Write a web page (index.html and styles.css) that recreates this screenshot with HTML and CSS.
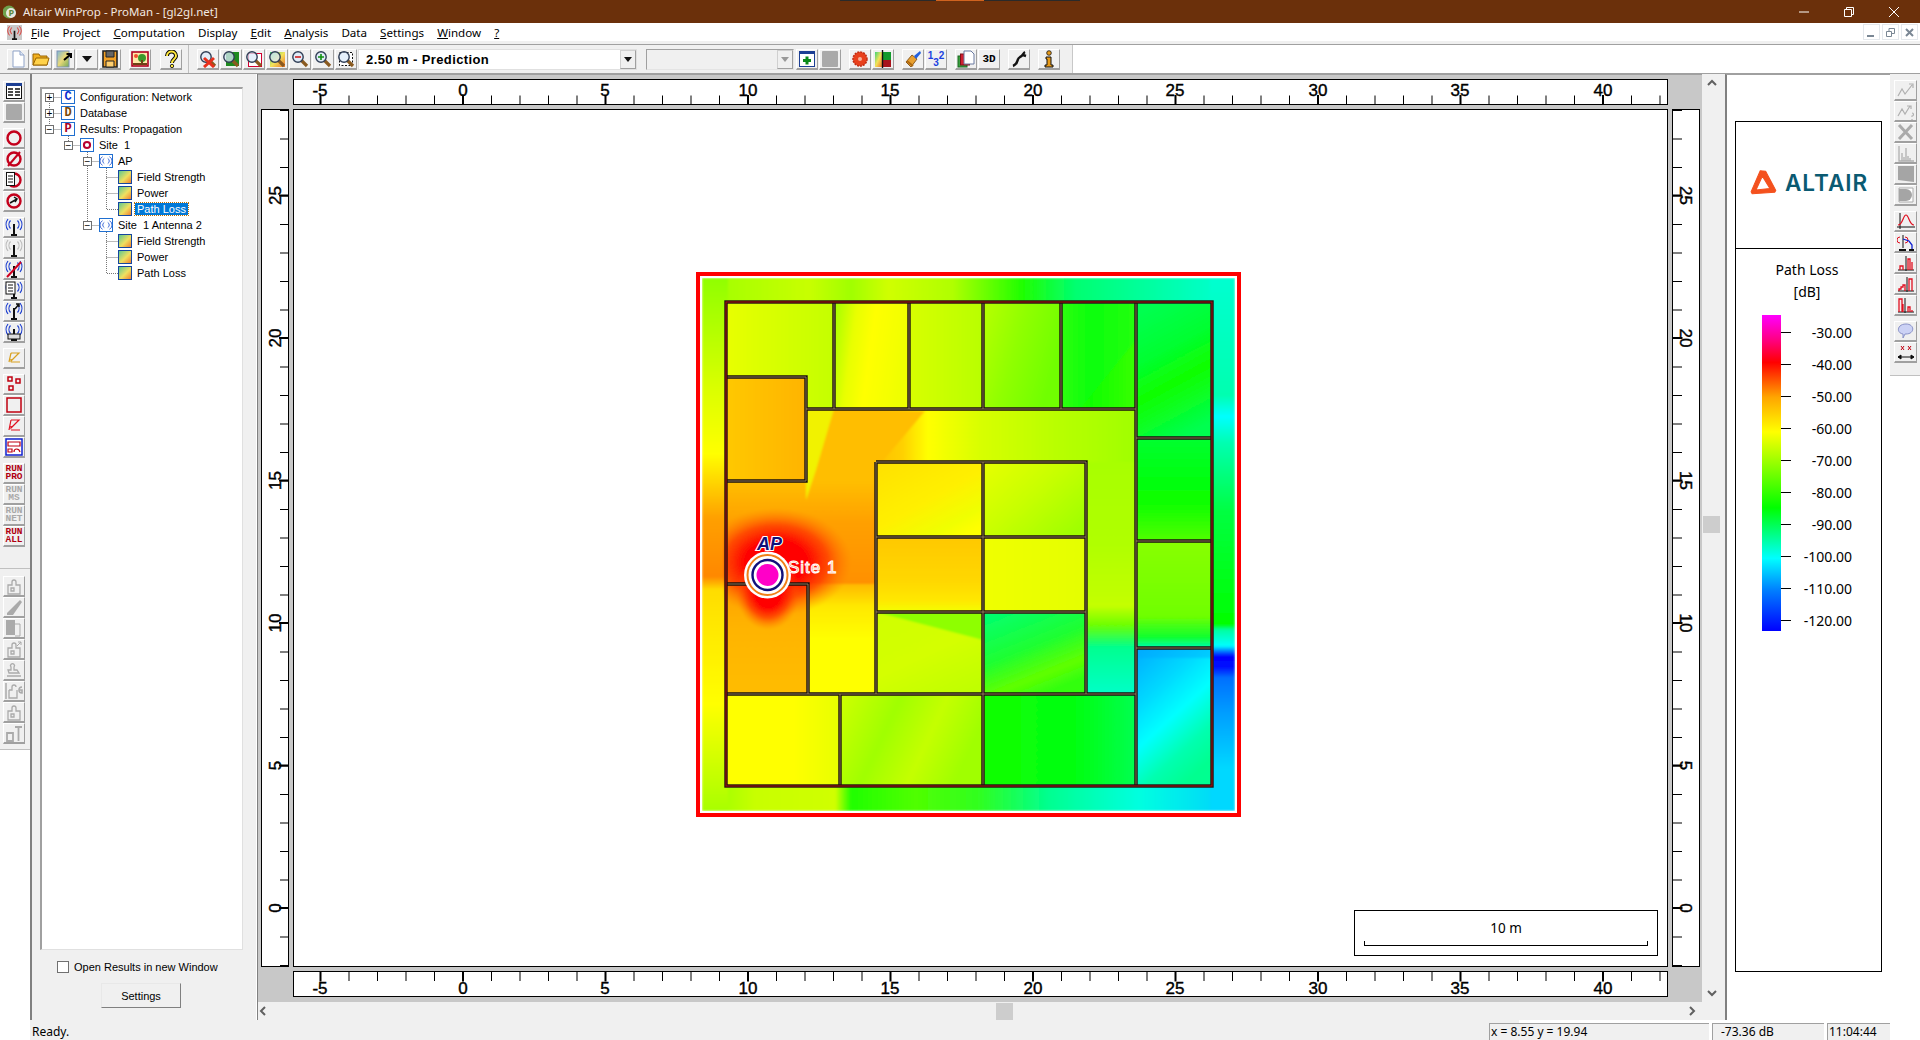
FILE: index.html
```html
<!DOCTYPE html>
<html>
<head>
    <meta charset="utf-8" />
    <title>Altair WinProp - ProMan</title>
    <link rel="stylesheet" href="styles.css">
</head>
<body>
<svg class="defs" width="0" height="0">
    <defs>
        <linearGradient id="heat" x1="0" y1="0" x2="1" y2="1"><stop offset="0" stop-color="#3fd27a"/><stop offset=".5" stop-color="#f3e35a"/><stop offset="1" stop-color="#f0722a"/></linearGradient>
        <linearGradient id="heat-soft" x1="0" y1="0" x2="1" y2="1"><stop offset="0" stop-color="#7fb8d8"/><stop offset=".5" stop-color="#e8d878"/><stop offset="1" stop-color="#70a858"/></linearGradient>
    </defs>
    <symbol id="doc" viewBox="0 0 18 18"><path d="M4 1h7l4 4v12H4z" fill="#fff" stroke="#8fa3c8"/><path d="M11 1v4h4" fill="#dde6f5" stroke="#8fa3c8"/></symbol>
    <symbol id="open" viewBox="0 0 18 18"><path d="M1 15V4h6l1 2h7v9z" fill="#f2b01e" stroke="#9a6400"/><path d="M1 15l3-7h13l-2 7z" fill="#ffd24a" stroke="#9a6400"/></symbol>
    <symbol id="import" viewBox="0 0 18 18"><rect x="2" y="1" width="12" height="16" fill="url(#heat-soft)" stroke="#7f93b5"/><path d="M9 10l6-5M11.500 4H16v4" fill="none" stroke="#000" stroke-width="2"/></symbol>
    <symbol id="save" viewBox="0 0 18 18"><path d="M2 1h14v16H2z" fill="#f2a024" stroke="#222" stroke-width="1.6"/><path d="M5 1h8v6H5z" fill="#666" stroke="#222"/><path d="M5 11h8v6H5z" fill="#ffcf70" stroke="#222"/></symbol>
    <symbol id="pic" viewBox="0 0 18 18"><rect x="1" y="2" width="16" height="14" fill="#ffe9a8" stroke="#b00020" stroke-width="1.6"/><circle cx="5" cy="6" r="2" fill="#f05030"/><circle cx="11" cy="8" r="4" fill="#3c9a2c"/><path d="M2 14h14M11 10v4" stroke="#6d4316" stroke-width="2"/></symbol>
    <symbol id="help" viewBox="0 0 18 18"><path d="M5 6c0-6 9-6 9 0 0 3-4 3-4 7" fill="none" stroke="#000" stroke-width="4"/><path d="M5 6c0-6 9-6 9 0 0 3-4 3-4 7" fill="none" stroke="#ffe83c" stroke-width="2"/><circle cx="10" cy="16" r="1.7" fill="#ffe83c" stroke="#000" stroke-width=".8"/></symbol>
    <symbol id="mag" viewBox="0 0 18 18"><path d="M10 10l6 6" stroke="#8a5a20" stroke-width="3.2"/><circle cx="7" cy="7" r="5.2" fill="#dcebfb" fill-opacity=".75" stroke="#2f3d55" stroke-width="1.4"/></symbol>
    <symbol id="z-x" viewBox="0 0 18 18"><use href="#mag" width="18" height="18"/><path d="M5 8l10 9M15 8L5 17" stroke="#e8301c" stroke-width="3"/></symbol>
    <symbol id="z-g" viewBox="0 0 18 18"><rect x="4" y="2" width="13" height="14" fill="#1e8a1e"/><use href="#mag" width="18" height="18"/></symbol>
    <symbol id="z-r" viewBox="0 0 18 18"><rect x="3.500" y="3.500" width="13" height="13" fill="#fff" stroke="#d00030"/><use href="#mag" width="18" height="18"/></symbol>
    <symbol id="z-h" viewBox="0 0 18 18"><rect x="2" y="2" width="15" height="15" fill="url(#heat)"/><use href="#mag" width="18" height="18"/></symbol>
    <symbol id="z-m" viewBox="0 0 18 18"><use href="#mag" width="18" height="18"/><path d="M4 7h6" stroke="#d02020" stroke-width="1.6"/></symbol>
    <symbol id="z-p" viewBox="0 0 18 18"><use href="#mag" width="18" height="18"/><path d="M4 7h6M7 4v6" stroke="#109010" stroke-width="1.6"/></symbol>
    <symbol id="z-d" viewBox="0 0 18 18"><rect x="2.500" y="2.500" width="13" height="13" fill="#fff" stroke="#111" stroke-dasharray="2 1.500"/><use href="#mag" width="18" height="18"/></symbol>
    <symbol id="win" viewBox="0 0 18 18"><rect x="1.500" y="1.500" width="15" height="15" fill="#fff" stroke="#1c3f94"/><rect x="1" y="1" width="16" height="3" fill="#1c3f94"/><path d="M9 6.500v8M5 10.500h8" stroke="#0a8a1a" stroke-width="3"/></symbol>
    <symbol id="grey" viewBox="0 0 18 18"><rect x="1" y="1" width="16" height="16" rx="1" fill="#a9a9a9"/></symbol>
    <symbol id="stop" viewBox="0 0 18 18"><circle cx="9" cy="9" r="7" fill="#e8401c"/><circle cx="9" cy="9" r="7" fill="none" stroke="#c02a10" stroke-width="1.500" stroke-dasharray="2 1"/><circle cx="9" cy="9" r="2" fill="#f5b09a"/></symbol>
    <symbol id="bars" viewBox="0 0 18 18"><rect x="1" y="2" width="7" height="15" fill="url(#heat)"/><rect x="9" y="2" width="8" height="8" fill="#139a2c"/><rect x="9" y="10" width="8" height="7" fill="#a8141c"/><path d="M8.500 0v18" stroke="#111" stroke-width="1.400"/></symbol>
    <symbol id="brush" viewBox="0 0 18 18"><path d="M2 12l6-7 5 4-6 8z" fill="#e8a030" stroke="#8a5a20"/><path d="M3 11l6 5" stroke="#b06a10" stroke-width="2"/><path d="M10 6l6-5 1 2-5 6z" fill="#2060e0"/></symbol>
    <symbol id="copies" viewBox="0 0 18 18"><rect x="1" y="6" width="9" height="11" fill="#3aa040" stroke="#1a6a20"/><rect x="3.500" y="4" width="9" height="11" fill="#d02030" stroke="#801018"/><path d="M7 1h7l3 3v10H7z" fill="#fff" stroke="#6a7aa0"/></symbol>
    <symbol id="tool" viewBox="0 0 18 18"><path d="M3 16c6-2 3-7 7-9 3-1 3-4 5-5M13 5l3 1" fill="none" stroke="#111" stroke-width="2.400"/></symbol>
    <symbol id="info" viewBox="0 0 18 18"><circle cx="9" cy="3" r="2.300" fill="#e89a18" stroke="#111" stroke-width=".8"/><path d="M6 7h5v8h2v2H5v-2h2V9H6z" fill="#e89a18" stroke="#111"/></symbol>
    <symbol id="table" viewBox="0 0 18 18"><rect x="1.500" y="1.500" width="15" height="15" fill="#fff" stroke="#111"/><rect x="1" y="1" width="16" height="3" fill="#1c3f94"/><path d="M3 7h5M10 7h5M3 10h5M10 10h5M3 13h5M10 13h5" stroke="#111" stroke-width="1.600"/></symbol>
    <symbol id="ring" viewBox="0 0 18 18"><circle cx="9" cy="9" r="6.500" fill="none" stroke="#c4001c" stroke-width="2.400"/></symbol>
    <symbol id="ring-x" viewBox="0 0 18 18"><use href="#ring" width="18" height="18"/><path d="M3 16L15 2" stroke="#c4001c" stroke-width="2"/></symbol>
    <symbol id="ring-d" viewBox="0 0 18 18"><use href="#ring" width="18" height="18"/><rect x="1.500" y="1.500" width="8" height="13" fill="#fff" stroke="#111"/><path d="M3 5h5M3 8h5M3 11h5" stroke="#111"/></symbol>
    <symbol id="ring-a" viewBox="0 0 18 18"><use href="#ring" width="18" height="18"/><path d="M5 11l7-4M9 5l3 2-2 3" fill="none" stroke="#111" stroke-width="1.500"/></symbol>
    <symbol id="ant" viewBox="0 0 18 18"><path d="M5.500 2.500a6 6 0 0 0 0 8M12.500 2.500a6 6 0 0 1 0 8M3 1a9 9 0 0 0 0 11M15 1a9 9 0 0 1 0 11" fill="none" stroke="#1d3fd0" stroke-width="1.200"/><path d="M9 6v10" stroke="#111" stroke-width="2"/><path d="M6 17h6" stroke="#111" stroke-width="2"/></symbol>
    <symbol id="ant-off" viewBox="0 0 18 18"><path d="M5.500 2.500a6 6 0 0 0 0 8M12.500 2.500a6 6 0 0 1 0 8M3 1a9 9 0 0 0 0 11M15 1a9 9 0 0 1 0 11" fill="none" stroke="#bbb" stroke-width="1.200"/><path d="M9 6v10" stroke="#111" stroke-width="2"/><path d="M6 17h6" stroke="#111" stroke-width="2"/></symbol>
    <symbol id="ant-x" viewBox="0 0 18 18"><use href="#ant" width="18" height="18"/><path d="M2 17L16 2" stroke="#d00020" stroke-width="2"/></symbol>
    <symbol id="ant-d" viewBox="0 0 18 18"><use href="#ant" width="18" height="18"/><rect x="1" y="1" width="9" height="12" fill="#fff" stroke="#111"/><path d="M3 4h5M3 7h5M3 10h5" stroke="#111"/></symbol>
    <symbol id="ant-a" viewBox="0 0 18 18"><use href="#ant" width="18" height="18"/><path d="M10 7l4-5M11 2h3v3" fill="none" stroke="#111" stroke-width="1.500"/></symbol>
    <symbol id="ant-p" viewBox="0 0 18 18"><use href="#ant" width="18" height="18"/><rect x="3" y="11" width="12" height="5" fill="#ddd" stroke="#111"/></symbol>
    <symbol id="poly-y" viewBox="0 0 18 18"><path d="M6 4h8l-8 8v-2M6 13h9M6 4l-2 9" fill="none" stroke="#d8a020" stroke-width="1.200"/></symbol>
    <symbol id="poly-r" viewBox="0 0 18 18"><path d="M6 3h8l-8 8v-2M6 13h9M6 3l-2 10" fill="none" stroke="#e01020" stroke-width="1.200"/></symbol>
    <symbol id="dots" viewBox="0 0 18 18"><path d="M3 2h4v4H3zM11 4h4v4h-4zM4 11h4v4H4z" fill="none" stroke="#c00010" stroke-width="1.500"/></symbol>
    <symbol id="box" viewBox="0 0 18 18"><rect x="2" y="2" width="14" height="14" fill="none" stroke="#c00010" stroke-width="1.500"/></symbol>
    <symbol id="frame" viewBox="0 0 18 18"><rect x="1" y="1" width="16" height="16" fill="#fff" stroke="#1020d0" stroke-width="1.500"/><path d="M3 4h12v4H3zM3 11h4v3H3zM9 14c0-4 5-4 6 0" fill="none" stroke="#c00010" stroke-width="1.200"/></symbol>
    <symbol id="puz" viewBox="0 0 18 18"><path d="M3 8h4V5a2 2 0 1 1 4 0v3h4v9H3zM6 11h3v3H6z" fill="none" stroke="#aaa" stroke-width="1.300"/></symbol>
    <symbol id="puz-s" viewBox="0 0 18 18"><path d="M2 15L15 2l2 2-9 13H2z" fill="#aaa"/></symbol>
    <symbol id="puz-d" viewBox="0 0 18 18"><path d="M1 1h9v15H1z" fill="#aaa"/><path d="M10 5h5v12h-5" fill="none" stroke="#aaa"/></symbol>
    <symbol id="puz-a" viewBox="0 0 18 18"><use href="#puz" width="18" height="18"/><path d="M12 6l4-4M13 2h3v3" fill="none" stroke="#aaa"/></symbol>
    <symbol id="puz-b" viewBox="0 0 18 18"><path d="M2 15h14M4 12h10l-2-3H9V6a2 2 0 1 0-3 0v3H3z" fill="none" stroke="#aaa" stroke-width="1.300"/></symbol>
    <symbol id="puz-l" viewBox="0 0 18 18"><path d="M1 1v16" stroke="#aaa" stroke-width="1.500"/><path d="M4 8h3V5a2 2 0 1 1 4 0M4 8v8h8V8" fill="none" stroke="#aaa" stroke-width="1.300"/><path d="M17 5a3 3 0 1 0 0 6v-3h-2" fill="none" stroke="#aaa" stroke-width="1.600"/></symbol>
    <symbol id="puz-t" viewBox="0 0 18 18"><path d="M2 17V9h6v8zM10 3h7M13.500 3v14" fill="none" stroke="#aaa" stroke-width="1.800"/></symbol>
    <symbol id="line-a" viewBox="0 0 18 18"><path d="M1 15l4-7 3 5 7-9M12 3h4v4" fill="none" stroke="#b0b0b0" stroke-width="1.200"/></symbol>
    <symbol id="line-q" viewBox="0 0 18 18"><path d="M1 14l4-7 3 5 5-8M10 4h4v3M15 11c2 0 2 3 0 3v1M15 17v1" fill="none" stroke="#b0b0b0" stroke-width="1.200"/></symbol>
    <symbol id="line-x" viewBox="0 0 18 18"><path d="M2 2l13 14M15 2L2 16" stroke="#aaa" stroke-width="3"/></symbol>
    <symbol id="hist" viewBox="0 0 18 18"><path d="M2 2v15h15M5 17V9M9 17V4M11 17v-5M13 17v-3M7 17v-4" fill="none" stroke="#b0b0b0" stroke-width="1.300"/></symbol>
    <symbol id="shape" viewBox="0 0 18 18"><path d="M1 1h16v16l-16-2z" fill="#a5a5a5"/></symbol>
    <symbol id="shape-d" viewBox="0 0 18 18"><path d="M2 2h14v14H2z" fill="#fff" stroke="#aaa"/><path d="M2 3h7a5 5 0 0 1 0 12H2z" fill="#a5a5a5"/></symbol>
    <symbol id="bell" viewBox="0 0 18 18"><path d="M3 1v16M0 15h18" stroke="#111"/><path d="M1 13c5 0 5-10 8-10s3 10 8 10" fill="none" stroke="#e01020" stroke-width="1.200"/></symbol>
    <symbol id="ant-g" viewBox="0 0 18 18"><path d="M3 4a3 3 0 0 0 0 6M8 4a3 3 0 0 1 0 6" fill="none" stroke="#e01020"/><path d="M6 2v13" stroke="#111"/><path d="M6 6l6 2 3 4v5" fill="none" stroke="#1020d0" stroke-width="1.300"/><path d="M2 17h7M12 17h5" stroke="#111" stroke-width="2"/></symbol>
    <symbol id="b-1" viewBox="0 0 18 18"><path d="M1 16h16M9 2v15" stroke="#111"/><path d="M3 16v-4h3v4M11 16V5h2v11M15 16V8" fill="none" stroke="#e01020" stroke-width="1.300"/></symbol>
    <symbol id="b-2" viewBox="0 0 18 18"><path d="M1 16h16M10 2v15" stroke="#111"/><path d="M2 16v-2h2v-2h2v-2h2v6M12 16V4h3v12" fill="none" stroke="#e01020" stroke-width="1.300"/></symbol>
    <symbol id="b-3" viewBox="0 0 18 18"><path d="M1 16h16M8 2v15" stroke="#111"/><path d="M2 16V3h3v13M6 16V8M11 16v-5h2v5M15 16v-2" fill="none" stroke="#e01020" stroke-width="1.300"/></symbol>
    <symbol id="bubble" viewBox="0 0 18 18"><path d="M9 2c9 0 9 10 0 10H8l-2 4v-4C-1 11 0 2 9 2z" fill="#ccd2f5" stroke="#8a92c8"/></symbol>
    <symbol id="dist" viewBox="0 0 18 18"><path d="M1 14h16M1 14l3-2v4zM17 14l-3-2v4z" stroke="#111" stroke-width="1"/><path d="M4 3l3 4M7 3L4 7M11 3l3 4M14 3l-3 4" stroke="#c00010"/></symbol>
    <symbol id="site" viewBox="0 0 14 14"><circle cx="7" cy="7" r="3.600" fill="#fff" stroke="#b80030" stroke-width="2.400"/></symbol>
    <symbol id="wave" viewBox="0 0 14 14"><path d="M5 4a3.400 3.400 0 0 0 0 6M9 4a3.400 3.400 0 0 1 0 6M3 2a5.600 5.600 0 0 0 0 10M11 2a5.600 5.600 0 0 1 0 10" fill="none" stroke="#1d4fd0"/></symbol>
</svg>

<div class="titlebar">
    <span class="app-logo"><svg width="14" height="16" viewBox="0 0 14 16"><circle cx="6" cy="8" r="6.500" fill="#6fa04c"/><circle cx="8" cy="9" r="5" fill="#e8e8e0"/><text x="5.500" y="12" class="logo-p">P</text></svg></span>
    <span class="app-title">Altair WinProp - ProMan - [gl2gl.net]</span>
    <div class="strip"><i></i><b></b><i></i></div>
    <div class="caption">
        <svg width="14" height="14" viewBox="0 0 14 14"><path d="M2 7h10" stroke="#fff"/></svg>
        <svg width="14" height="14" viewBox="0 0 14 14"><path d="M2.500 4.500h7v7h-7zM4.500 4.500v-2h7v7h-2" fill="none" stroke="#fff"/></svg>
        <svg width="14" height="14" viewBox="0 0 14 14"><path d="M2 2l10 10M12 2L2 12" stroke="#fff"/></svg>
    </div>
</div>

<div class="menubar">
    <span class="menu-icon"><svg width="15" height="15" viewBox="0 0 18 18"><rect width="18" height="18" fill="#c9c9c9"/><path d="M5.500 3a6 6 0 0 0 0 8M12.500 3a6 6 0 0 1 0 8M3 1.500a9 9 0 0 0 0 11M15 1.500a9 9 0 0 1 0 11" fill="none" stroke="#e0201c"/><path d="M9 7v9M6 17h6" stroke="#111" stroke-width="2"/></svg></span>
    <span><u>F</u>ile</span>
    <span>Project</span>
    <span><u>C</u>omputation</span>
    <span>Display</span>
    <span><u>E</u>dit</span>
    <span><u>A</u>nalysis</span>
    <span>Data</span>
    <span><u>S</u>ettings</span>
    <span><u>W</u>indow</span>
    <span><u>?</u></span>
    <div class="mdi-caption">
        <span class="mdi-btn"><svg width="11" height="11" viewBox="0 0 11 11"><path d="M1 9h7" stroke="#7a8794" stroke-width="2"/></svg></span>
        <span class="mdi-btn"><svg width="11" height="11" viewBox="0 0 11 11"><path d="M1.500 4.500h5v5h-5zM4 4V1.500h5.500v5H7" fill="none" stroke="#7a8794"/></svg></span>
        <span class="mdi-btn"><svg width="11" height="11" viewBox="0 0 11 11"><path d="M2 2l7 7M9 2l-7 7" stroke="#7a8794" stroke-width="2"/></svg></span>
    </div>
</div>

<div class="toolbar">
    <div class="toolbar-inner">
        <span class="tb"><svg class="i"><use href="#doc"/></svg></span>
        <span class="tb"><svg class="i"><use href="#open"/></svg></span>
        <span class="tb"><svg class="i"><use href="#import"/></svg></span>
        <span class="tb"><svg width="10" height="6" viewBox="0 0 10 6"><path d="M0 0h10L5 6z" fill="#111"/></svg></span>
        <span class="tb"><svg class="i"><use href="#save"/></svg></span>
        <span class="tb ml7"><svg class="i"><use href="#pic"/></svg></span>
        <span class="tb ml8"><svg class="i"><use href="#help"/></svg></span>
        <span class="sep"></span>
        <span class="tb"><svg class="i"><use href="#z-x"/></svg></span>
        <span class="tb"><svg class="i"><use href="#z-g"/></svg></span>
        <span class="tb"><svg class="i"><use href="#z-r"/></svg></span>
        <span class="tb"><svg class="i"><use href="#z-h"/></svg></span>
        <span class="tb"><svg class="i"><use href="#z-m"/></svg></span>
        <span class="tb"><svg class="i"><use href="#z-p"/></svg></span>
        <span class="tb"><svg class="i"><use href="#z-d"/></svg></span>
        <div class="combo combo-main">2.50 m - Prediction<span class="combo-arrow"><svg width="8" height="5" viewBox="0 0 8 5"><path d="M0 0h8L4 5z" fill="#111"/></svg></span></div>
        <div class="combo combo-off"><span class="combo-arrow"><svg width="8" height="5" viewBox="0 0 8 5"><path d="M0 0h8L4 5z" fill="#999"/></svg></span></div>
        <span class="tb ml1"><svg class="i"><use href="#win"/></svg></span>
        <span class="tb"><svg class="i"><use href="#grey"/></svg></span>
        <span class="tb ml7"><svg class="i"><use href="#stop"/></svg></span>
        <span class="tb"><svg class="i"><use href="#bars"/></svg></span>
        <span class="tb ml7"><svg class="i"><use href="#brush"/></svg></span>
        <span class="tb nums"><sup>1</sup><sub>3</sub><sup>2</sup></span>
        <span class="tb ml7"><svg class="i"><use href="#copies"/></svg></span>
        <span class="tb label3d">3D</span>
        <span class="tb ml7"><svg class="i"><use href="#tool"/></svg></span>
        <span class="tb ml7"><svg class="i"><use href="#info"/></svg></span>
    </div>
</div>

<div class="main">
    <div class="side">
        <div class="side-inner">
            <span class="tb"><svg class="i"><use href="#table"/></svg></span>
            <span class="tb"><svg class="i"><use href="#grey"/></svg></span>
            <span class="tb mt4"><svg class="i"><use href="#ring"/></svg></span>
            <span class="tb"><svg class="i"><use href="#ring-x"/></svg></span>
            <span class="tb"><svg class="i"><use href="#ring-d"/></svg></span>
            <span class="tb"><svg class="i"><use href="#ring-a"/></svg></span>
            <span class="tb mt4"><svg class="i"><use href="#ant"/></svg></span>
            <span class="tb"><svg class="i"><use href="#ant-off"/></svg></span>
            <span class="tb"><svg class="i"><use href="#ant-x"/></svg></span>
            <span class="tb"><svg class="i"><use href="#ant-d"/></svg></span>
            <span class="tb"><svg class="i"><use href="#ant-a"/></svg></span>
            <span class="tb"><svg class="i"><use href="#ant-p"/></svg></span>
            <span class="tb mt4"><svg class="i"><use href="#poly-y"/></svg></span>
            <span class="tb mt4"><svg class="i"><use href="#dots"/></svg></span>
            <span class="tb"><svg class="i"><use href="#box"/></svg></span>
            <span class="tb"><svg class="i"><use href="#poly-r"/></svg></span>
            <span class="tb"><svg class="i"><use href="#frame"/></svg></span>
            <span class="tb run mt4">RUN<br>PRO</span>
            <span class="tb run off">RUN<br>MS</span>
            <span class="tb run off">RUN<br>NET</span>
            <span class="tb run">RUN<br>ALL</span>
            <div class="side-rule"></div>
            <span class="tb"><svg class="i"><use href="#puz"/></svg></span>
            <span class="tb"><svg class="i"><use href="#puz-s"/></svg></span>
            <span class="tb"><svg class="i"><use href="#puz-d"/></svg></span>
            <span class="tb"><svg class="i"><use href="#puz-a"/></svg></span>
            <span class="tb"><svg class="i"><use href="#puz-b"/></svg></span>
            <span class="tb"><svg class="i"><use href="#puz-l"/></svg></span>
            <span class="tb"><svg class="i"><use href="#puz"/></svg></span>
            <span class="tb"><svg class="i"><use href="#puz-t"/></svg></span>
        </div>
    </div>

    <div class="tree-panel">
        <div class="tree">
            <svg class="tree-guides" width="200" height="230" viewBox="42 89 200 230"><path d="M49.500 97V129M53.500 97.500h7M53.500 113.500h7M53.500 129.500h7M68.500 134V145M72.500 145.500h7M87.500 150V225M91.500 161.500h7M91.500 225.500h7M106.500 166V209.500H118M106.500 177.500H118M106.500 193.500H118M106.500 230V273.500H118M106.500 241.500H118M106.500 257.500H118" fill="none" stroke="#777" stroke-dasharray="1 1"/></svg>
            <div class="node l0"><span class="exp">+</span><span class="nico blue">C</span><span>Configuration: Network</span></div>
            <div class="node l0"><span class="exp">+</span><span class="nico brown">D</span><span>Database</span></div>
            <div class="node l0"><span class="exp">&#8722;</span><span class="nico red">P</span><span>Results: Propagation</span></div>
            <div class="node l1"><span class="exp">&#8722;</span><span class="nico"><svg width="12" height="12"><use href="#site"/></svg></span><span>Site&nbsp; 1</span></div>
            <div class="node l2"><span class="exp">&#8722;</span><span class="nico"><svg width="12" height="12"><use href="#wave"/></svg></span><span>AP</span></div>
            <div class="node l3"><span class="nico heat"></span><span>Field Strength</span></div>
            <div class="node l3"><span class="nico heat"></span><span>Power</span></div>
            <div class="node l3"><span class="nico heat"></span><span class="sel">Path Loss</span></div>
            <div class="node l2"><span class="exp">&#8722;</span><span class="nico"><svg width="12" height="12"><use href="#wave"/></svg></span><span>Site&nbsp; 1 Antenna 2</span></div>
            <div class="node l3"><span class="nico heat"></span><span>Field Strength</span></div>
            <div class="node l3"><span class="nico heat"></span><span>Power</span></div>
            <div class="node l3"><span class="nico heat"></span><span>Path Loss</span></div>
        </div>
        <label class="check"><span class="check-box"></span>Open Results in new Window</label>
        <div class="btn-settings">Settings</div>
    </div>

    <div class="mdi">
        <div class="mdi-body">
            <div class="canvas">
                <div class="ruler-corner"></div>
                <svg class="ruler" width="1375" height="26" viewBox="293 79 1375 26">
                    <rect x="293.500" y="79.500" width="1374" height="25" fill="#fff" stroke="#000"/>
                    <line x1="320" y1="100" x2="1668" y2="100" stroke="#000" stroke-width="9" stroke-dasharray="1 27.500"/>
                    <line x1="319.500" y1="100" x2="1668" y2="100" stroke="#000" stroke-width="10" stroke-dasharray="2 140.500"/>
                    <g class="rl" text-anchor="middle">
                        <text x="320" y="96">-5</text><text x="463" y="96">0</text><text x="605" y="96">5</text><text x="748" y="96">10</text><text x="890" y="96">15</text><text x="1033" y="96">20</text><text x="1175" y="96">25</text><text x="1318" y="96">30</text><text x="1460" y="96">35</text><text x="1603" y="96">40</text>
                    </g>
                </svg>
                <div class="ruler-corner"></div>

                <svg class="ruler" width="28" height="858" viewBox="261 109 28 858">
                    <rect x="261.500" y="109.500" width="27" height="857" fill="#fff" stroke="#000"/>
                    <line x1="284.500" y1="110" x2="284.500" y2="966" stroke="#000" stroke-width="9" stroke-dasharray="1 27.500"/>
                    <line x1="284" y1="194.500" x2="284" y2="966" stroke="#000" stroke-width="10" stroke-dasharray="2 140.500"/>
                    <path d="M280 110h9" stroke="#000" stroke-width="2"/>
                    <g class="rl" text-anchor="middle">
                        <text transform="translate(281 195.500) rotate(-90)">25</text><text transform="translate(281 338) rotate(-90)">20</text><text transform="translate(281 480.500) rotate(-90)">15</text><text transform="translate(281 623) rotate(-90)">10</text><text transform="translate(281 765.500) rotate(-90)">5</text><text transform="translate(281 908) rotate(-90)">0</text>
                    </g>
                </svg>

                <div class="view">
                    <svg class="map" width="545" height="545" viewBox="696 272 545 545">
                        <defs>
                            <linearGradient id="s-top"><stop offset="0" stop-color="#80ff00"/><stop offset=".05" stop-color="#a8ff00"/><stop offset=".2" stop-color="#c8ff00"/><stop offset=".28" stop-color="#a0ff00"/><stop offset=".35" stop-color="#d0ff00"/><stop offset=".47" stop-color="#b0ff00"/><stop offset=".6" stop-color="#20ff00"/><stop offset=".7" stop-color="#00ff70"/><stop offset="1" stop-color="#00ffd8"/></linearGradient>
                            <linearGradient id="s-bot"><stop offset="0" stop-color="#90ff00"/><stop offset=".1" stop-color="#c8ff00"/><stop offset=".25" stop-color="#d0ff00"/><stop offset=".28" stop-color="#20ff00"/><stop offset=".4" stop-color="#50ff00"/><stop offset=".52" stop-color="#30ff20"/><stop offset=".65" stop-color="#00ff90"/><stop offset=".82" stop-color="#00ffe0"/><stop offset="1" stop-color="#00d0ff"/></linearGradient>
                            <linearGradient id="s-left" x2="0" y2="1"><stop offset="0" stop-color="#90ff00"/><stop offset=".2" stop-color="#d8ff00"/><stop offset=".33" stop-color="#ffff00"/><stop offset=".45" stop-color="#ffa000"/><stop offset=".56" stop-color="#ff8800"/><stop offset=".585" stop-color="#ffdd00"/><stop offset=".8" stop-color="#ffff00"/><stop offset="1" stop-color="#a8ff00"/></linearGradient>
                            <linearGradient id="s-right" x2="0" y2="1"><stop offset="0" stop-color="#00ffd0"/><stop offset=".22" stop-color="#00ffb0"/><stop offset=".26" stop-color="#00ffff"/><stop offset=".31" stop-color="#00ffb0"/><stop offset=".44" stop-color="#00ff40"/><stop offset=".65" stop-color="#00ff00"/><stop offset=".66" stop-color="#00ffa0"/><stop offset=".69" stop-color="#00ffff"/><stop offset=".71" stop-color="#0000ff"/><stop offset=".73" stop-color="#0010ff"/><stop offset=".75" stop-color="#0070ff"/><stop offset=".82" stop-color="#00a0ff"/><stop offset=".92" stop-color="#00d8ff"/><stop offset="1" stop-color="#00d8ff"/></linearGradient>
                            <linearGradient id="r1"><stop offset="0" stop-color="#e8ff00"/><stop offset="1" stop-color="#c4ff00"/></linearGradient>
                            <linearGradient id="r2" x2="1" y2=".2"><stop offset="0" stop-color="#a0ff00"/><stop offset=".3" stop-color="#e8ff00"/><stop offset=".55" stop-color="#ffff00"/><stop offset="1" stop-color="#f0ff00"/></linearGradient>
                            <linearGradient id="r3"><stop offset="0" stop-color="#d8ff00"/><stop offset="1" stop-color="#b8ff00"/></linearGradient>
                            <linearGradient id="r4" x2="1" y2=".4"><stop offset="0" stop-color="#b8ff00"/><stop offset=".5" stop-color="#90ff00"/><stop offset="1" stop-color="#70ff00"/></linearGradient>
                            <linearGradient id="r5"><stop offset="0" stop-color="#48ff00"/><stop offset=".4" stop-color="#10ff00"/><stop offset="1" stop-color="#38ff00"/></linearGradient>
                            <linearGradient id="r6" x1=".3" y1="0" x2=".6" y2="1"><stop offset="0" stop-color="#00ff50"/><stop offset=".35" stop-color="#00ff30"/><stop offset=".6" stop-color="#10ff00"/><stop offset="1" stop-color="#00ff50"/></linearGradient>
                            <linearGradient id="r7" x2="0" y2="1"><stop offset="0" stop-color="#00ff30"/><stop offset=".6" stop-color="#08ff00"/><stop offset="1" stop-color="#50ff00"/></linearGradient>
                            <linearGradient id="r8" x2="0" y2="1"><stop offset="0" stop-color="#88ff00"/><stop offset=".7" stop-color="#70ff00"/><stop offset=".9" stop-color="#10ff30"/><stop offset="1" stop-color="#00ffb0"/></linearGradient>
                            <linearGradient id="r9" x1=".1" y1="0" x2=".6" y2="1"><stop offset="0" stop-color="#00b0ff"/><stop offset=".3" stop-color="#00d8ff"/><stop offset=".55" stop-color="#00ffff"/><stop offset=".8" stop-color="#00ffb0"/><stop offset="1" stop-color="#00ff90"/></linearGradient>
                            <linearGradient id="room"><stop offset="0" stop-color="#ffc800"/><stop offset="1" stop-color="#ffb400"/></linearGradient>
                            <linearGradient id="hall-t"><stop offset="0" stop-color="#ffc000"/><stop offset=".1" stop-color="#ffd000"/><stop offset=".2" stop-color="#ffff00"/><stop offset=".4" stop-color="#d8ff00"/><stop offset=".7" stop-color="#b8ff00"/><stop offset="1" stop-color="#a0ff00"/></linearGradient>
                            <linearGradient id="hall-m" x2="0" y2="1"><stop offset="0" stop-color="#ffbe00"/><stop offset=".4" stop-color="#ffa000"/><stop offset="1" stop-color="#ff9000"/></linearGradient>
                            <linearGradient id="hall-l" x2="0" y2="1"><stop offset="0" stop-color="#ffb800"/><stop offset=".2" stop-color="#ffe800"/><stop offset=".5" stop-color="#ffff00"/><stop offset="1" stop-color="#ffff00"/></linearGradient>
                            <linearGradient id="hall-r" x2="0" y2="1"><stop offset="0" stop-color="#a8ff00"/><stop offset=".35" stop-color="#b0ff00"/><stop offset=".62" stop-color="#c4ff00"/><stop offset=".7" stop-color="#70ff00"/><stop offset=".8" stop-color="#00ff90"/><stop offset="1" stop-color="#00ffc8"/></linearGradient>
                            <linearGradient id="c1" x1="0" y1="0" x2=".8" y2="1"><stop offset="0" stop-color="#ffe000"/><stop offset=".55" stop-color="#fff000"/><stop offset=".85" stop-color="#f0ff00"/><stop offset="1" stop-color="#ffff00"/></linearGradient>
                            <linearGradient id="c2" x1="0" y1="0" x2="1" y2=".8"><stop offset="0" stop-color="#e8ff00"/><stop offset=".5" stop-color="#c8ff00"/><stop offset="1" stop-color="#a0ff00"/></linearGradient>
                            <linearGradient id="c3" x2="0" y2="1"><stop offset="0" stop-color="#ffc800"/><stop offset=".6" stop-color="#ffd800"/><stop offset=".85" stop-color="#ffe800"/><stop offset="1" stop-color="#f4ff00"/></linearGradient>
                            <linearGradient id="c4"><stop offset="0" stop-color="#f0ff00"/><stop offset="1" stop-color="#e4ff00"/></linearGradient>
                            <linearGradient id="c5" x1=".2" y1="0" x2=".8" y2="1"><stop offset="0" stop-color="#d0ff00"/><stop offset=".5" stop-color="#d4ff00"/><stop offset="1" stop-color="#c0ff00"/></linearGradient>
                            <linearGradient id="c6" x1=".1" y1="0" x2=".6" y2="1"><stop offset="0" stop-color="#00ff70"/><stop offset=".5" stop-color="#20ff30"/><stop offset=".8" stop-color="#60ff00"/><stop offset="1" stop-color="#30ff10"/></linearGradient>
                            <linearGradient id="lo" x2="0" y2="1"><stop offset="0" stop-color="#ffa000"/><stop offset=".4" stop-color="#ffb400"/><stop offset="1" stop-color="#ffbc00"/></linearGradient>
                            <linearGradient id="b1"><stop offset="0" stop-color="#ffff00"/><stop offset=".6" stop-color="#ffff00"/><stop offset="1" stop-color="#e8ff00"/></linearGradient>
                            <linearGradient id="b2" x2="1" y2=".3"><stop offset="0" stop-color="#d0ff00"/><stop offset=".4" stop-color="#a0ff00"/><stop offset=".7" stop-color="#c4ff00"/><stop offset="1" stop-color="#a0ff00"/></linearGradient>
                            <linearGradient id="b3"><stop offset="0" stop-color="#10ff00"/><stop offset=".6" stop-color="#00ff10"/><stop offset="1" stop-color="#00ff50"/></linearGradient>
                            <radialGradient id="ap"><stop offset="0" stop-color="#ff0000"/><stop offset=".4" stop-color="#ff0000"/><stop offset=".68" stop-color="#ff2800" stop-opacity=".7"/><stop offset="1" stop-color="#ff7000" stop-opacity="0"/></radialGradient>
                            <filter id="soft" x="0" y="0" width="1" height="1"><feGaussianBlur stdDeviation="1.200"/></filter>
                            <clipPath id="clip-heat"><rect x="702" y="278" width="533" height="533"/></clipPath>
                            <clipPath id="clip-ap"><rect x="724" y="480" width="160" height="170"/></clipPath>
                        </defs>
                        <rect x="696" y="272" width="545" height="545" fill="#fff"/>
                        <g clip-path="url(#clip-heat)">
                            <g filter="url(#soft)">
                                <rect x="702" y="278" width="533" height="26" fill="url(#s-top)"/>
                                <rect x="702" y="784" width="533" height="27" fill="url(#s-bot)"/>
                                <rect x="702" y="278" width="26" height="533" fill="url(#s-left)"/>
                                <rect x="1210" y="278" width="25" height="533" fill="url(#s-right)"/>
                                <path d="M726 302H834V409H806V377H726z" fill="url(#r1)"/>
                                <rect x="834" y="302" width="75" height="107" fill="url(#r2)"/>
                                <rect x="909" y="302" width="74" height="107" fill="url(#r3)"/>
                                <rect x="983" y="302" width="78" height="107" fill="url(#r4)"/>
                                <rect x="1061" y="302" width="75" height="107" fill="url(#r5)"/>
                                <rect x="1136" y="302" width="76" height="136" fill="url(#r6)"/>
                                <rect x="1136" y="438" width="76" height="103" fill="url(#r7)"/>
                                <rect x="1136" y="541" width="76" height="107" fill="url(#r8)"/>
                                <rect x="1136" y="648" width="76" height="138" fill="url(#r9)"/>
                                <rect x="726" y="377" width="80" height="104" fill="url(#room)"/>
                                <rect x="876" y="409" width="260" height="53" fill="url(#hall-t)"/>
                                <rect x="806" y="409" width="70" height="72" fill="#ffbe00"/>
                                <rect x="726" y="481" width="150" height="103" fill="url(#hall-m)"/>
                                <path d="M806 409H834L816 470 806 500z" fill="#eeff00" opacity=".8"/>
                                <path d="M834 411H925L882 462H876V481H818z" fill="#ffbe00"/>
                                <rect x="808" y="584" width="68" height="110" fill="url(#hall-l)"/>
                                <rect x="1086" y="462" width="50" height="232" fill="url(#hall-r)"/>
                                <rect x="876" y="462" width="107" height="75" fill="url(#c1)"/>
                                <rect x="983" y="462" width="103" height="75" fill="url(#c2)"/>
                                <rect x="876" y="537" width="107" height="75" fill="url(#c3)"/>
                                <rect x="983" y="537" width="103" height="75" fill="url(#c4)"/>
                                <rect x="876" y="612" width="107" height="82" fill="url(#c5)"/>
                                <rect x="983" y="612" width="103" height="82" fill="url(#c6)"/>
                                <rect x="726" y="584" width="82" height="110" fill="url(#lo)"/>
                                <rect x="726" y="694" width="114" height="92" fill="url(#b1)"/>
                                <rect x="840" y="694" width="143" height="92" fill="url(#b2)"/>
                                <rect x="983" y="694" width="153" height="92" fill="url(#b3)"/>
                                <path d="M1061 302L1136 302 1136 340 1080 409 1061 409z" fill="#00ff20" opacity=".35"/>
                                <path d="M876 612L983 640 983 612z" fill="#70ff00" opacity=".7"/>
                                <path d="M1136 648h76v10h-76z" fill="#00a8ff" opacity=".4"/>
                                <g clip-path="url(#clip-ap)">
                                    <ellipse cx="776" cy="562" rx="76" ry="54" fill="url(#ap)"/>
                                    <ellipse cx="768" cy="592" rx="32" ry="38" fill="url(#ap)"/>
                                </g>
                            </g>
                        </g>
                        <rect x="698" y="274" width="541" height="541" fill="none" stroke="#ff0000" stroke-width="4"/>
                        <g fill="none">
                            <path class="wall" d="M834 302V409M909 302V409M983 302V409M1061 302V409M1136 302V786M806 409H1136M726 377H806V481H726M1136 438H1212M1136 541H1212M1136 648H1212M876 462H1086V694M876 462V694M876 537H1086M876 612H1086M983 462V786M726 694H1136M840 694V786M726 584H808V694"/>
                            <path class="wall-in" d="M834 302V409M909 302V409M983 302V409M1061 302V409M1136 302V786M806 409H1136M726 377H806V481H726M1136 438H1212M1136 541H1212M1136 648H1212M876 462H1086V694M876 462V694M876 537H1086M876 612H1086M983 462V786M726 694H1136M840 694V786M726 584H808V694"/>
                            <rect class="outer" x="726" y="302" width="486" height="484"/>
                            <rect class="outer-in" x="726" y="302" width="486" height="484"/>
                        </g>
                        <circle cx="767.500" cy="575" r="23.500" fill="#fff"/>
                        <circle cx="767.500" cy="575" r="20" fill="none" stroke="#f08018" stroke-width="2"/>
                        <circle cx="767.500" cy="575" r="15" fill="#fff" stroke="#10107a" stroke-width="2.400"/>
                        <circle cx="767.500" cy="575" r="11" fill="#ff00c8"/>
                        <text class="ap-label" x="757" y="550">AP</text>
                        <text class="site-label" x="788" y="573">Site 1</text>
                    </svg>
                    <div class="scalebar">
                        <span>10 m</span>
                        <i class="scale-line"></i>
                    </div>
                </div>

                <svg class="ruler" width="28" height="858" viewBox="1672 109 28 858">
                    <rect x="1672.500" y="109.500" width="27" height="857" fill="#fff" stroke="#000"/>
                    <line x1="1677" y1="110" x2="1677" y2="966" stroke="#000" stroke-width="10" stroke-dasharray="1 27.500"/>
                    <line x1="1677.500" y1="194.500" x2="1677.500" y2="966" stroke="#000" stroke-width="10" stroke-dasharray="2 140.500"/>
                    <path d="M1672 110h10" stroke="#000" stroke-width="2"/>
                    <g class="rl" text-anchor="middle">
                        <text transform="translate(1680 195.500) rotate(90)">25</text><text transform="translate(1680 338) rotate(90)">20</text><text transform="translate(1680 480.500) rotate(90)">15</text><text transform="translate(1680 623) rotate(90)">10</text><text transform="translate(1680 765.500) rotate(90)">5</text><text transform="translate(1680 908) rotate(90)">0</text>
                    </g>
                </svg>

                <div class="ruler-corner"></div>
                <svg class="ruler" width="1375" height="26" viewBox="293 971 1375 26">
                    <rect x="293.500" y="971.500" width="1374" height="25" fill="#fff" stroke="#000"/>
                    <line x1="320" y1="976.500" x2="1668" y2="976.500" stroke="#000" stroke-width="9" stroke-dasharray="1 27.500"/>
                    <line x1="319.500" y1="976.500" x2="1668" y2="976.500" stroke="#000" stroke-width="10" stroke-dasharray="2 140.500"/>
                    <g class="rl" text-anchor="middle">
                        <text x="320" y="994">-5</text><text x="463" y="994">0</text><text x="605" y="994">5</text><text x="748" y="994">10</text><text x="890" y="994">15</text><text x="1033" y="994">20</text><text x="1175" y="994">25</text><text x="1318" y="994">30</text><text x="1460" y="994">35</text><text x="1603" y="994">40</text>
                    </g>
                </svg>
                <div class="ruler-corner"></div>
            </div>
            <div class="hscroll">
                <svg width="8" height="10" viewBox="0 0 8 10"><path d="M6 1L2 5l4 4" fill="none" stroke="#606060" stroke-width="2"/></svg>
                <span class="thumb-h"></span>
                <svg width="8" height="10" viewBox="0 0 8 10"><path d="M2 1l4 4-4 4" fill="none" stroke="#606060" stroke-width="2"/></svg>
            </div>
        </div>
        <div class="vscroll">
            <svg width="10" height="8" viewBox="0 0 10 8"><path d="M1 6l4-4 4 4" fill="none" stroke="#606060" stroke-width="2"/></svg>
            <span class="thumb-v"></span>
            <svg width="10" height="8" viewBox="0 0 10 8"><path d="M1 2l4 4 4-4" fill="none" stroke="#606060" stroke-width="2"/></svg>
        </div>
    </div>

    <div class="legend-panel">
        <div class="legend">
            <div class="logo">
                <svg width="30" height="28" viewBox="0 0 28 26"><path d="M10.500 2.500l5 .5 9.500 18-1 1.500L3 24l-1-2zM12.500 7.500L6.500 20.500l13-1.500z" fill="#f4511e" fill-rule="evenodd" stroke="#f4511e" stroke-linejoin="round"/></svg>
                <span class="logo-text">ALTAIR</span>
            </div>
            <div class="legend-body">
                <div class="legend-title">Path Loss</div>
                <div class="legend-title">[dB]</div>
                <div class="scale">
                    <div class="scale-bar"></div>
                    <div class="scale-rows">
                        <div class="scale-row"><i></i><span>-30.00</span></div>
                        <div class="scale-row"><i></i><span>-40.00</span></div>
                        <div class="scale-row"><i></i><span>-50.00</span></div>
                        <div class="scale-row"><i></i><span>-60.00</span></div>
                        <div class="scale-row"><i></i><span>-70.00</span></div>
                        <div class="scale-row"><i></i><span>-80.00</span></div>
                        <div class="scale-row"><i></i><span>-90.00</span></div>
                        <div class="scale-row"><i></i><span>-100.00</span></div>
                        <div class="scale-row"><i></i><span>-110.00</span></div>
                        <div class="scale-row"><i></i><span>-120.00</span></div>
                    </div>
                </div>
            </div>
        </div>
    </div>

    <div class="side side-right">
        <div class="side-inner">
            <span class="tb"><svg class="i"><use href="#line-a"/></svg></span>
            <span class="tb"><svg class="i"><use href="#line-q"/></svg></span>
            <span class="tb"><svg class="i"><use href="#line-x"/></svg></span>
            <span class="tb"><svg class="i"><use href="#hist"/></svg></span>
            <span class="tb"><svg class="i"><use href="#shape"/></svg></span>
            <span class="tb"><svg class="i"><use href="#shape-d"/></svg></span>
            <span class="tb mt4"><svg class="i"><use href="#bell"/></svg></span>
            <span class="tb"><svg class="i"><use href="#ant-g"/></svg></span>
            <span class="tb"><svg class="i"><use href="#b-1"/></svg></span>
            <span class="tb"><svg class="i"><use href="#b-2"/></svg></span>
            <span class="tb"><svg class="i"><use href="#b-3"/></svg></span>
            <span class="tb mt4"><svg class="i"><use href="#bubble"/></svg></span>
            <span class="tb"><svg class="i"><use href="#dist"/></svg></span>
        </div>
    </div>
</div>

<div class="status">
    <div class="status-ready">Ready.</div>
    <div class="pane pane-pos">x = 8.55 y = 19.94</div>
    <div class="pane pane-db">-73.36 dB</div>
    <div class="pane pane-time">11:04:44</div>
</div>
</body>
</html>
```

FILE: styles.css
```css
* {
    box-sizing: border-box;
}
html, body {
    margin: 0;
    width: 1920px;
    height: 1040px;
    overflow: hidden;
}
body {
    background: #ffffff;
    color: #000000;
    font-family: "Liberation Sans", sans-serif;
    font-size: 11px;
    display: flex;
    flex-direction: column;
}
.defs {
    position: absolute;
}

/* title and menu */
.titlebar {
    height: 23px;
    background: #6b300b;
    color: #f2e9e2;
    font-family: "Noto Sans", sans-serif;
    font-size: 11.5px;
    display: flex;
    align-items: center;
    position: relative;
    flex: none;
}
.app-logo {
    width: 23px;
    padding-left: 3px;
    display: flex;
}
.logo-p {
    font-size: 9px;
    font-weight: bold;
    fill: #5a8a3c;
}
.strip {
    position: absolute;
    top: 0;
    left: 840px;
    display: flex;
    height: 1px;
}
.strip i {
    width: 96px;
    background: #2a2a2a;
}
.strip b {
    width: 48px;
    background: #d0631f;
}
.caption {
    margin-left: auto;
    display: flex;
    gap: 31px;
    padding-right: 19px;
}
.menubar {
    height: 21px;
    background: #ffffff;
    border-bottom: 3px solid #f0f0f0;
    padding-left: 7px;
    display: flex;
    align-items: center;
    gap: 13px;
    font-family: "Noto Sans", sans-serif;
    font-size: 11.6px;
    flex: none;
}
.menu-icon {
    width: 15px;
    margin-right: -4px;
    display: flex;
}
.mdi-caption {
    margin-left: auto;
    display: flex;
    gap: 2px;
    padding-right: 2px;
}
.mdi-btn {
    width: 17px;
    height: 16px;
    border: 1px solid #e4e8ec;
    display: flex;
    align-items: center;
    justify-content: center;
}

/* toolbars */
.toolbar {
    height: 30px;
    background: #ffffff;
    border-top: 1px solid #a0a0a0;
    border-bottom: 1px solid #a0a0a0;
    flex: none;
}
.toolbar-inner {
    width: 1073px;
    height: 28px;
    background: #f0f0f0;
    border-right: 1px solid #c8c8c8;
    padding: 4px 0 0 7px;
    display: flex;
    gap: 1px;
}
.tb {
    width: 22px;
    height: 21px;
    background: #f0f0f0;
    border-top: 1px solid #ffffff;
    border-left: 1px solid #ffffff;
    border-right: 1px solid #a0a0a0;
    border-bottom: 2px solid #a0a0a0;
    display: flex;
    align-items: center;
    justify-content: center;
    flex: none;
}
.i {
    width: 18px;
    height: 18px;
    display: block;
}
.ml1 {
    margin-left: 1px;
}
.ml7 {
    margin-left: 7px;
}
.ml8 {
    margin-left: 8px;
}
.mt4 {
    margin-top: 5px;
}
.sep {
    width: 1px;
    height: 28px;
    margin: -4px 7px 0 5px;
    background: #c0c0c0;
}
.combo {
    height: 21px;
    display: flex;
    align-items: center;
    flex: none;
}
.combo-main {
    width: 279px;
    background: #ffffff;
    padding-left: 7px;
    font: bold 13px "Liberation Sans", sans-serif;
    letter-spacing: .4px;
    border: 1px solid #e0e0e0;
    justify-content: space-between;
}
.combo-off {
    width: 148px;
    margin-left: 8px;
    background: #f0f0f0;
    border: 1px solid #a0a0a0;
    border-bottom-color: #e4e4e4;
    border-right-color: #e4e4e4;
    justify-content: flex-end;
}
.combo-arrow {
    width: 16px;
    height: 19px;
    background: #f0f0f0;
    border: 1px solid #d0d0d0;
    border-right-color: #a0a0a0;
    border-bottom-color: #a0a0a0;
    display: flex;
    align-items: center;
    justify-content: center;
}
.nums {
    color: #1a40e0;
    font: bold 10px "Liberation Sans", sans-serif;
    line-height: 1;
}
.nums sup {
    margin-top: -7px;
    font-size: 10px;
}
.nums sub {
    margin-top: 7px;
    font-size: 10px;
}
.label3d {
    font: bold 11px "Liberation Mono", monospace;
}

/* main area */
.main {
    flex: 1;
    display: flex;
    min-height: 0;
    background: #f0f0f0;
}
.side {
    width: 30px;
    flex: none;
    background: #ffffff;
}
.side-inner {
    background: #f0f0f0;
    height: 676px;
    padding: 7px 0 0 3px;
    border-bottom: 1px solid #c0c0c0;
    display: flex;
    flex-direction: column;
}
.side-rule {
    height: 1px;
    flex: none;
    margin: 21px 0 7px -3px;
    background: #c0c0c0;
}
.run {
    color: #b00010;
    font: bold 9.5px/8.5px "Liberation Mono", monospace;
    text-align: center;
    letter-spacing: 0;
}
.run.off {
    color: #a8a8a8;
}
.side-right {
    width: 30px;
}
.side-right .side-inner {
    height: 302px;
    padding: 6px 0 0 4px;
}
.side-right .tb {
    width: 23px;
}
.tree-panel {
    width: 227px;
    flex: none;
    border-left: 2px solid #808080;
    border-right: 1px solid #ffffff;
    padding: 13px 0 0 8px;
}
.tree {
    width: 203px;
    height: 863px;
    background: #ffffff;
    border: 1px solid #e0e0e0;
    border-top: 2px solid #a0a0a0;
    border-left: 2px solid #a0a0a0;
    position: relative;
}
.tree-guides {
    position: absolute;
    left: 0;
    top: 0;
}
.node {
    height: 16px;
    display: flex;
    align-items: center;
    position: relative;
    white-space: nowrap;
}
.l0 {
    padding-left: 3px;
}
.l1 {
    padding-left: 22px;
}
.l2 {
    padding-left: 41px;
}
.l3 {
    padding-left: 76px;
}
.exp {
    width: 9px;
    height: 9px;
    margin-right: 7px;
    border: 1px solid #707070;
    background: #ffffff;
    font: 10px/7px "Liberation Sans", sans-serif;
    text-align: center;
}
.nico {
    width: 14px;
    height: 14px;
    margin-right: 5px;
    background: #ffffff;
    border: 1px solid #1f6fd0;
    font: bold 12px/12px "Liberation Mono", monospace;
    text-align: center;
    display: flex;
    align-items: center;
    justify-content: center;
}
.blue {
    color: #1030d0;
}
.brown {
    color: #7a4a08;
}
.red {
    color: #a80028;
}
.heat {
    background: linear-gradient(135deg, #5fc890, #efe060 55%, #f08030);
    border-color: #1446a0;
}
.sel {
    background: #0078d7;
    color: #ffffff;
    margin-left: -2px;
    padding: 0 2px;
    outline: 1px dotted #c07000;
}
.check {
    display: flex;
    align-items: center;
    gap: 5px;
    margin: 10px 0 0 17px;
    height: 14px;
}
.check-box {
    width: 12px;
    height: 12px;
    background: #ffffff;
    border: 1px solid #707070;
}
.btn-settings {
    width: 80px;
    height: 25px;
    margin: 9px 0 0 61px;
    background: #f0f0f0;
    border-top: 1px solid #e8e8e8;
    border-left: 1px solid #e8e8e8;
    border-right: 1px solid #808080;
    border-bottom: 1px solid #808080;
    display: flex;
    align-items: center;
    justify-content: center;
}

/* document view */
.mdi {
    flex: none;
    width: 1464px;
    display: flex;
}
.mdi-body {
    width: 1445px;
    border-left: 1px solid #808080;
}
.canvas {
    height: 928px;
    background: #c8c8c8;
    border-top: 1px solid #a0a0a0;
    padding: 4px 0 0 3px;
    display: grid;
    grid-template-columns: 28px 1375px 28px;
    grid-template-rows: 26px 858px 26px;
    gap: 4px;
}
.ruler {
    display: block;
}
.rl text {
    font: 17px "Liberation Sans", sans-serif;
    stroke: #000000;
    stroke-width: .4px;
}
.view {
    background: #ffffff;
    border: 1px solid #000000;
    position: relative;
}
.map {
    position: absolute;
    left: 402px;
    top: 162px;
    display: block;
}
.wall {
    stroke: #1a100c;
    stroke-width: 3.4;
}
.wall-in {
    stroke: #a89068;
    stroke-width: .8;
}
.outer {
    stroke: #1e1010;
    stroke-width: 3.4;
}
.outer-in {
    stroke: #b01010;
    stroke-width: 1;
}
.ap-label {
    font: italic bold 18px "Liberation Sans", sans-serif;
    fill: #10107a;
    stroke: #ffffff;
    stroke-width: 2.2px;
    paint-order: stroke;
}
.site-label {
    font: 17px "Liberation Sans", sans-serif;
    fill: #ff6a20;
    stroke: #ffffff;
    stroke-width: 1px;
    letter-spacing: 1px;
}
.scalebar {
    position: absolute;
    left: 1060px;
    top: 800px;
    width: 304px;
    height: 46px;
    background: #ffffff;
    border: 1px solid #000000;
    padding-top: 8px;
    font: 13.5px "Noto Sans", sans-serif;
    text-align: center;
}
.scale-line {
    display: block;
    height: 5px;
    margin: 4px 9px 0;
    border: 1px solid #000000;
    border-top: 0;
}
.hscroll {
    height: 18px;
    padding: 0 6px 0 1px;
    display: flex;
    align-items: center;
    justify-content: space-between;
    position: relative;
}
.thumb-h {
    width: 17px;
    height: 17px;
    margin-left: 54px;
    background: #cdcdcd;
}
.vscroll {
    width: 19px;
    height: 928px;
    padding: 5px 0;
    display: flex;
    flex-direction: column;
    align-items: center;
    justify-content: space-between;
}
.thumb-v {
    width: 17px;
    height: 17px;
    margin-bottom: 27px;
    background: #cdcdcd;
}

/* legend */
.legend-panel {
    width: 165px;
    flex: none;
    margin-left: 4px;
    background: #ffffff;
    border-left: 2px solid #808080;
    border-top: 1px solid #a0a0a0;
    padding: 46px 0 0 8px;
    font-family: "Noto Sans", sans-serif;
}
.legend {
    width: 147px;
    height: 851px;
    border: 1px solid #000000;
}
.logo {
    height: 127px;
    border-bottom: 1px solid #000000;
    display: flex;
    align-items: center;
    padding: 0 0 6px 13px;
    gap: 6px;
}
.logo-text {
    font: 600 22.5px Inter, sans-serif;
    color: #0a5a72;
    letter-spacing: 1px;
}
.legend-body {
    padding-top: 10px;
}
.legend-title {
    height: 22px;
    font-size: 14px;
    line-height: 22px;
    text-align: center;
    margin-left: -3px;
}
.scale {
    display: flex;
    margin: 12px 0 0 26px;
}
.scale-bar {
    width: 19px;
    height: 316px;
    background: linear-gradient(#ff00ff, #ff0080 8%, #ff0000 15%, #ffa500 26%, #ffff00 37%, #00ff00 61%, #00ffff 77%, #0080ff 87%, #0000ff);
}
.scale-rows {
    padding-top: 1px;
}
.scale-row {
    height: 32px;
    width: 71px;
    display: flex;
    align-items: center;
    justify-content: space-between;
    font-size: 14px;
}
.scale-row i {
    width: 10px;
    height: 1px;
    background: #000000;
}

/* status bar */
.status {
    height: 20px;
    flex: none;
    display: flex;
    padding-right: 30px;
    position: relative;
    font-family: "Noto Sans", sans-serif;
}
.status-ready {
    width: 1489px;
    margin-left: 30px;
    padding: 3px 0 0 2px;
    background: #f0f0f0;
    font-size: 12px;
}
.pane {
    height: 17px;
    margin-top: 3px;
    background: #f0f0f0;
    border-top: 1px solid #a0a0a0;
    border-left: 1px solid #a0a0a0;
    font-size: 12px;
    line-height: 16px;
    padding-left: 1px;
}
.pane-pos {
    width: 220px;
    margin-left: -30px;
}
.pane-db {
    width: 112px;
    margin-left: 3px;
    padding-left: 8px;
}
.pane-time {
    width: 63px;
    margin-left: 3px;
}
```
